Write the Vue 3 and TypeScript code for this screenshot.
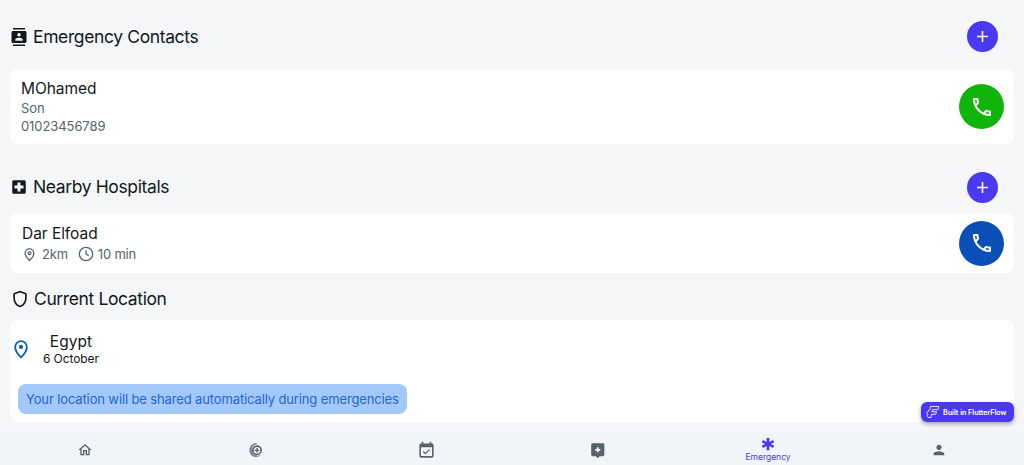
<template>
  <div class="page">
    <main class="content">
      <section class="head head-contacts">
        <div class="head-title">
          <svg class="head-icon" viewBox="0 0 24 24"><path d="M20 0H4v2h16V0zM4 24h16v-2H4v2zM20 4H4c-1.100 0-2 .9-2 2v12c0 1.100.9 2 2 2h16c1.100 0 2-.9 2-2V6c0-1.100-.9-2-2-2zm-8 2.750c1.240 0 2.250 1.010 2.250 2.250s-1.010 2.250-2.250 2.250S9.750 10.240 9.750 9 10.760 6.750 12 6.750zM17 17H7v-1.500c0-1.670 3.330-2.500 5-2.500s5 .83 5 2.500V17z" /></svg>
          <h2>Emergency Contacts</h2>
        </div>
        <button class="add-btn">
          <svg viewBox="0 0 24 24"><path :d="plusPath" /></svg>
        </button>
      </section>

      <div class="card contact-card">
        <div class="contact-info">
          <div class="name">MOhamed</div>
          <div class="sub first">Son</div>
          <div class="sub">01023456789</div>
        </div>
        <button class="call-btn green">
          <svg viewBox="0 0 24 24"><path :d="phonePath" /></svg>
        </button>
      </div>

      <section class="head head-hospitals">
        <div class="head-title">
          <svg class="head-icon" viewBox="0 0 24 24"><path d="M19 3H5c-1.100 0-1.990.9-1.990 2L3 19c0 1.100.9 2 2 2h14c1.100 0 2-.9 2-2V5c0-1.100-.9-2-2-2zm-1 11h-4v4h-4v-4H6v-4h4V6h4v4h4v4z" /></svg>
          <h2>Nearby Hospitals</h2>
        </div>
        <button class="add-btn">
          <svg viewBox="0 0 24 24"><path :d="plusPath" /></svg>
        </button>
      </section>

      <div class="card hospital-card">
        <div class="hospital-info">
          <div class="name">Dar Elfoad</div>
          <div class="meta">
            <svg class="pin-small" viewBox="0 0 24 24"><path d="M12 21.500s7-6.300 7-11.500a7 7 0 0 0-14 0c0 5.200 7 11.500 7 11.500z" /><circle cx="12" cy="10" r="2.300" /></svg>
            <span class="km">2km</span>
            <svg class="clock" viewBox="0 0 24 24"><circle cx="12" cy="12" r="10" /><path d="M12 6.500V12l4 2.500" /></svg>
            <span>10 min</span>
          </div>
        </div>
        <button class="call-btn blue">
          <svg viewBox="0 0 24 24"><path :d="phonePath" /></svg>
        </button>
      </div>

      <section class="head-location">
        <svg class="shield" viewBox="0 0 24 24"><path d="M12 2L4 5v6.090c0 5.050 3.410 9.760 8 10.910 4.590-1.150 8-5.860 8-10.910V5l-8-3zm6 9.090c0 4-2.550 7.700-6 8.830-3.450-1.130-6-4.820-6-8.830v-4.700l6-2.250 6 2.250v4.700z" /></svg>
        <h2>Current Location</h2>
      </section>

      <div class="card location-card">
        <div class="location-row">
          <svg class="pin-blue" viewBox="0 0 24 24"><path d="M12 22s7-6.800 7-12.500a7 7 0 0 0-14 0C5 15.200 12 22 12 22z" /><circle class="dot" cx="12" cy="9.500" r="2.500" /></svg>
          <div class="place">
            <div class="country">Egypt</div>
            <div class="city">6 October</div>
          </div>
        </div>
        <div class="notice">Your location will be shared automatically during emergencies</div>
      </div>
    </main>

    <nav class="nav">
      <div v-for="tab in tabs" :key="tab.id" class="tab" :class="{ active: tab.label }">
        <svg v-if="tab.id === 'home'" class="tab-icon" viewBox="0 0 24 24"><path d="M12 5.690l5 4.500V18h-2v-6H9v6H7v-7.810l5-4.500M12 3L2 12h3v8h6v-6h2v6h6v-8h3L12 3z" /></svg>
        <svg v-else-if="tab.id === 'care'" class="tab-icon care" viewBox="0 0 24 24">
          <path class="crescent" d="M13 1.500C6.800 1.500 2 6.300 2 12.300c0 5.600 4.400 10.200 10 10.200 3 0 5.700-1.200 7.500-3.300-1.900 1-4 1.400-6 1.200-4.500-.4-7.900-4-7.900-8.400 0-4.300 3.200-8 7.400-8.500z" />
          <circle class="ring" cx="13.500" cy="12.500" r="6.300" />
          <path d="M12.500 9h2v2.500H17v2h-2.500V16h-2v-2.500H10v-2h2.500z" />
        </svg>
        <svg v-else-if="tab.id === 'calendar'" class="tab-icon large" viewBox="0 0 24 24"><path d="M19 3h-1V1h-2v2H8V1H6v2H5c-1.110 0-1.990.9-1.990 2L3 19c0 1.100.89 2 2 2h14c1.100 0 2-.9 2-2V5c0-1.100-.9-2-2-2zm0 16H5V8h14v11zM16.530 11.060L15.470 10l-4.880 4.880-2.120-2.120-1.060 1.060L10.590 17l5.940-5.940z" /></svg>
        <svg v-else-if="tab.id === 'clinic'" class="tab-icon clinic" viewBox="0 0 24 24"><path fill-rule="evenodd" d="M5 3h14a2 2 0 0 1 2 2v14a2 2 0 0 1-2 2h-4.500L12 23.500 9.500 21H5a2 2 0 0 1-2-2V5a2 2 0 0 1 2-2zm5.800 5.500v2.300H8.500v2.400h2.300v2.300h2.400v-2.300h2.300v-2.400h-2.300V8.500z" /></svg>
        <svg v-else-if="tab.id === 'emergency'" class="tab-icon star" viewBox="0 0 24 24"><path d="M9.600 1.500h4.800v7l6.100-3.500 2.400 4.100-6.100 2.900 6.100 2.900-2.400 4.100-6.100-3.500v7H9.600v-7l-6.100 3.500-2.400-4.100L7.200 12 1.100 9.100 3.500 5l6.100 3.500z" /></svg>
        <svg v-else class="tab-icon" viewBox="0 0 24 24"><path d="M12 12c2.210 0 4-1.790 4-4s-1.790-4-4-4-4 1.790-4 4 1.790 4 4 4zm0 2c-2.670 0-8 1.340-8 4v2h16v-2c0-2.660-5.330-4-8-4z" /></svg>
        <span v-if="tab.label" class="tab-label">{{ tab.label }}</span>
      </div>
    </nav>

    <div class="ff-badge">
      <svg viewBox="0 0 24 24"><path d="M8 2.500h14L20.500 8H11l-1 3.500h8L16.500 16H9.500L8.500 21.500H5A3 3 0 0 1 3 16.500a3 3 0 0 1 1-5.500 3 3 0 0 1 2.500-3z" /></svg>
      <span>Built in FlutterFlow</span>
    </div>
  </div>
</template>

<script setup lang="ts">
const plusPath = 'M19 13h-6v6h-2v-6H5v-2h6V5h2v6h6v2z'

const phonePath =
  'M6.540 5c.06.89.21 1.760.45 2.590l-1.200 1.200c-.41-1.200-.67-2.470-.76-3.790h1.510m9.860 12.020c.85.24 1.720.39 2.600.45v1.490c-1.320-.09-2.590-.35-3.800-.75l1.200-1.190M7.500 3H4c-.55 0-1 .45-1 1 0 9.390 7.610 17 17 17 .55 0 1-.45 1-1v-3.490c0-.55-.45-1-1-1-1.240 0-2.450-.2-3.570-.57-.1-.04-.21-.05-.31-.05-.26 0-.51.1-.71.29l-2.200 2.200c-2.830-1.450-5.150-3.760-6.590-6.590l2.200-2.200c.28-.28.36-.67.25-1.020C8.700 6.450 8.500 5.250 8.500 4c0-.55-.45-1-1-1z'

const tabs: { id: string; label?: string }[] = [
  { id: 'home' },
  { id: 'care' },
  { id: 'calendar' },
  { id: 'clinic' },
  { id: 'emergency', label: 'Emergency' },
  { id: 'profile' },
]
</script>

<style>
html,
body {
  margin: 0;
  background: #f5f6f8;
}
</style>

<style scoped>
.page {
  position: relative;
  display: flex;
  flex-direction: column;
  width: 1024px;
  height: 465px;
  overflow: hidden;
  background: #f5f6f8;
  font-family: Inter, 'Liberation Sans', sans-serif;
  color: #14181b;
}

.content {
  flex: 1;
  display: flex;
  flex-direction: column;
  padding: 21px 10px 0;
}

.head {
  display: flex;
  align-items: center;
  justify-content: space-between;
  padding-right: 16px;
}

.head-hospitals {
  margin-top: 28px;
}

.head-hospitals .head-title {
  margin-bottom: 2px;
}

.head-contacts + .card {
  margin-top: 17px;
}

.head-hospitals + .card {
  margin-top: 10px;
}

.head-title,
.head-location {
  display: flex;
  align-items: center;
}

.head-icon {
  width: 18px;
  height: 18px;
  margin-right: 5px;
  fill: #14181b;
}

h2 {
  margin: 0;
  font-size: 17.5px;
  font-weight: 400;
  line-height: 24px;
  letter-spacing: -0.38px;
}

.add-btn {
  display: flex;
  align-items: center;
  justify-content: center;
  width: 31px;
  height: 31px;
  padding: 0;
  border: 0;
  border-radius: 50%;
  background: #4b39ef;
}

.add-btn svg {
  width: 19px;
  height: 19px;
  fill: #fff;
}

.card {
  display: flex;
  align-items: center;
  justify-content: space-between;
  background: #fff;
  border-radius: 8px;
}

.contact-card {
  height: 75px;
  padding: 0 10px 0 11px;
}

.contact-info {
  margin-top: -1px;
}

.hospital-card {
  height: 60px;
  padding: 0 10px 0 12px;
}

.name {
  font-size: 15.5px;
  line-height: 20px;
  letter-spacing: -0.05px;
}

.sub {
  margin-top: 2px;
  font-size: 13px;
  line-height: 16px;
  letter-spacing: -0.08px;
  color: #57636c;
}

.sub.first {
  margin-top: 1px;
}

.call-btn {
  display: flex;
  align-items: center;
  justify-content: center;
  width: 45px;
  height: 45px;
  padding: 0;
  border: 0;
  border-radius: 50%;
}

.call-btn svg {
  width: 24px;
  height: 24px;
  fill: #fff;
}

.green {
  background: #10b40b;
}

.blue {
  background: #0a4fb5;
}

.meta {
  display: flex;
  align-items: center;
  margin-top: 2px;
  font-size: 13px;
  line-height: 16px;
  letter-spacing: -0.2px;
  color: #57636c;
}

.pin-small {
  width: 15px;
  height: 15px;
  margin-right: 5px;
  fill: none;
  stroke: #57636c;
  stroke-width: 2;
}

.km {
  margin-right: 10px;
}

.clock {
  width: 16px;
  height: 16px;
  margin-right: 4px;
  fill: none;
  stroke: #57636c;
  stroke-width: 2;
}

.head-location {
  margin-top: 14px;
}

.shield {
  width: 20px;
  height: 20px;
  margin-right: 4px;
  fill: #14181b;
}

.location-card {
  flex-direction: column;
  align-items: flex-start;
  justify-content: flex-start;
  height: 102px;
  margin-top: 9px;
  padding: 0 8px;
  box-sizing: border-box;
}

.location-row {
  display: flex;
  align-items: center;
  height: 44px;
  margin-top: 7px;
}

.pin-blue {
  width: 20px;
  height: 20px;
  margin-left: -7px;
  fill: none;
  stroke: #0a5fb0;
  stroke-width: 2.200;
}

.pin-blue .dot {
  fill: #0a5fb0;
  stroke: none;
}

.place {
  display: flex;
  flex-direction: column;
  align-items: center;
  margin-left: 12px;
}

.country {
  font-size: 15.5px;
  line-height: 19px;
}

.city {
  font-size: 12px;
  line-height: 16px;
  letter-spacing: -0.1px;
}

.notice {
  margin-top: 13px;
  padding: 7px 8px;
  border-radius: 8px;
  background: #a3c9fb;
  color: #2468cc;
  font-size: 13px;
  line-height: 16px;
  letter-spacing: -0.13px;
}

.nav {
  display: grid;
  grid-template-columns: repeat(6, 1fr);
  height: 34px;
  box-sizing: border-box;
  padding-top: 4px;
  background: #f1f4f8;
}

.tab {
  display: flex;
  flex-direction: column;
  align-items: center;
  justify-content: center;
  color: #57636c;
}

.tab-icon {
  width: 16px;
  height: 16px;
  fill: #57636c;
}

.large {
  width: 19px;
  height: 19px;
}

.clinic {
  width: 17.500px;
  height: 17.500px;
}

.care .crescent {
  fill: #7d878f;
}

.care .ring {
  fill: none;
  stroke: #57636c;
  stroke-width: 2.400;
}

.tab.active .star {
  width: 14px;
  height: 14px;
  fill: #4b39ef;
}

.tab-label {
  margin-top: 1px;
  font-size: 8.500px;
  line-height: 11px;
  color: #4b39ef;
}

.ff-badge {
  position: absolute;
  top: 402px;
  left: 921px;
  display: flex;
  align-items: center;
  gap: 3px;
  width: 93px;
  height: 20px;
  box-sizing: border-box;
  padding-left: 5px;
  border-radius: 6px;
  background: #4b39ef;
  box-shadow: 0 2px 4px rgba(0, 0, 0, 0.35);
  color: #fff;
}

.ff-badge svg {
  width: 14px;
  height: 14px;
  fill: none;
  stroke: #fff;
  stroke-width: 1.500;
}

.ff-badge span {
  font-size: 7.100px;
  font-weight: 600;
  white-space: nowrap;
}
</style>
